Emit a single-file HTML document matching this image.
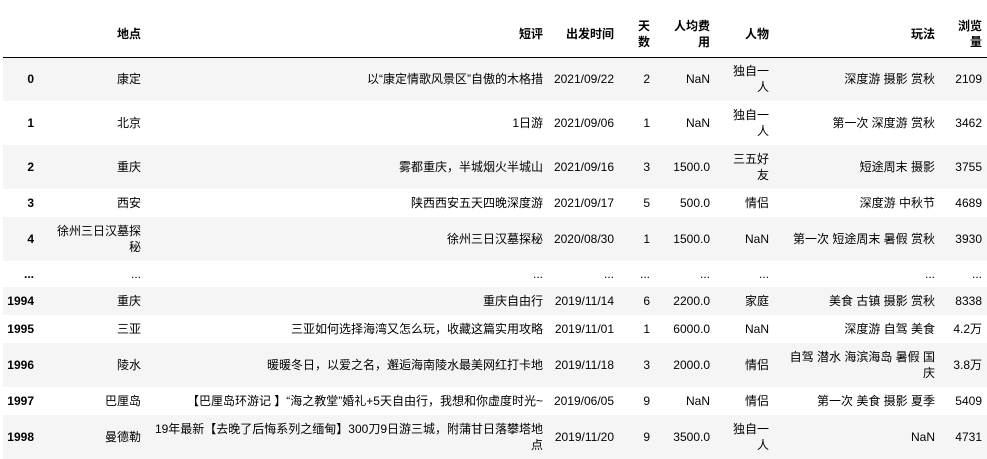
<!DOCTYPE html>
<html><head><meta charset="utf-8"><style>
body{margin:0;background:#fff;}
table{position:absolute;left:3px;top:0;border-collapse:collapse;table-layout:fixed;font-family:"Liberation Sans","Noto Sans CJK SC",sans-serif;font-size:12px;color:#000;}
td,th{padding:0 5px 0 0;text-align:right;vertical-align:middle;line-height:16px;white-space:nowrap;overflow:visible;}
th{font-weight:bold;}
thead tr{height:57px;}
thead th{padding-top:12px;border-bottom:1px solid #000;}
tbody th{font-weight:bold;}
tr.g{background:#f5f5f5;}
</style></head><body>
<table>
<colgroup><col style="width:36px"><col style="width:107px"><col style="width:402px"><col style="width:71px"><col style="width:36px"><col style="width:60px"><col style="width:59px"><col style="width:166px"><col style="width:47px"></colgroup>
<thead><tr><th></th><th>地点</th><th>短评</th><th>出发时间</th><th>天<br>数</th><th>人均费<br>用</th><th>人物</th><th>玩法</th><th>浏览<br>量</th></tr></thead>
<tbody>
<tr class="g" style="height:44px"><th>0</th><td>康定</td><td>以“康定情歌风景区”自傲的木格措</td><td>2021/09/22</td><td>2</td><td>NaN</td><td>独自一<br>人</td><td>深度游 摄影 赏秋</td><td>2109</td></tr>
<tr style="height:44px"><th>1</th><td>北京</td><td>1日游</td><td>2021/09/06</td><td>1</td><td>NaN</td><td>独自一<br>人</td><td>第一次 深度游 赏秋</td><td>3462</td></tr>
<tr class="g" style="height:44px"><th>2</th><td>重庆</td><td>雾都重庆，半城烟火半城山</td><td>2021/09/16</td><td>3</td><td>1500.0</td><td>三五好<br>友</td><td>短途周末 摄影</td><td>3755</td></tr>
<tr style="height:28px"><th>3</th><td>西安</td><td>陕西西安五天四晚深度游</td><td>2021/09/17</td><td>5</td><td>500.0</td><td>情侣</td><td>深度游 中秋节</td><td>4689</td></tr>
<tr class="g" style="height:44px"><th>4</th><td>徐州三日汉墓探<br>秘</td><td>徐州三日汉墓探秘</td><td>2020/08/30</td><td>1</td><td>1500.0</td><td>NaN</td><td>第一次 短途周末 暑假 赏秋</td><td>3930</td></tr>
<tr style="height:26px"><th>...</th><td>...</td><td>...</td><td>...</td><td>...</td><td>...</td><td>...</td><td>...</td><td>...</td></tr>
<tr class="g" style="height:28px"><th>1994</th><td>重庆</td><td>重庆自由行</td><td>2019/11/14</td><td>6</td><td>2200.0</td><td>家庭</td><td>美食 古镇 摄影 赏秋</td><td>8338</td></tr>
<tr style="height:28px"><th>1995</th><td>三亚</td><td>三亚如何选择海湾又怎么玩，收藏这篇实用攻略</td><td>2019/11/01</td><td>1</td><td>6000.0</td><td>NaN</td><td>深度游 自驾 美食</td><td>4.2万</td></tr>
<tr class="g" style="height:44px"><th>1996</th><td>陵水</td><td>暖暖冬日，以爱之名，邂逅海南陵水最美网红打卡地</td><td>2019/11/18</td><td>3</td><td>2000.0</td><td>情侣</td><td>自驾 潜水 海滨海岛 暑假 国<br>庆</td><td>3.8万</td></tr>
<tr style="height:28px"><th>1997</th><td>巴厘岛</td><td>【巴厘岛环游记 】“海之教堂”婚礼+5天自由行，我想和你虚度时光~</td><td>2019/06/05</td><td>9</td><td>NaN</td><td>情侣</td><td>第一次 美食 摄影 夏季</td><td>5409</td></tr>
<tr class="g" style="height:44px"><th>1998</th><td>曼德勒</td><td>19年最新【去晚了后悔系列之缅甸】300刀9日游三城，附蒲甘日落攀塔地<br>点</td><td>2019/11/20</td><td>9</td><td>3500.0</td><td>独自一<br>人</td><td>NaN</td><td>4731</td></tr>
</tbody></table>
</body></html>
